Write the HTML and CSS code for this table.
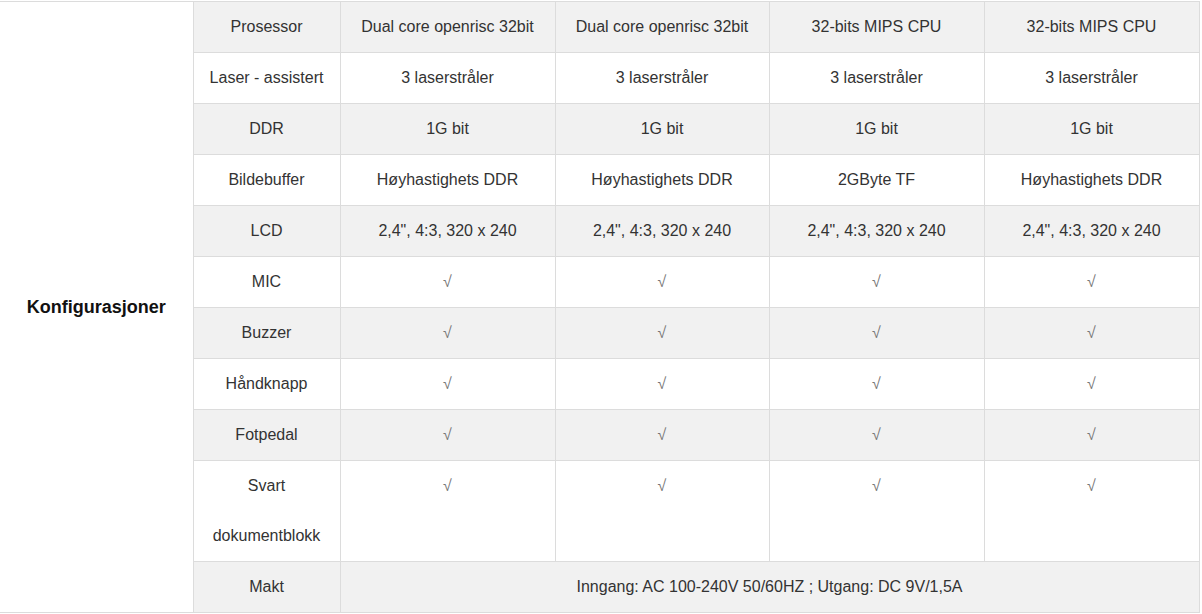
FILE: index.html
```html
<!DOCTYPE html>
<html lang="no">
<head>
<meta charset="utf-8">
<link rel="stylesheet" href="styles.css">
</head>
<body>
<table class="spec">
  <colgroup>
    <col class="c-group"><col class="c-label"><col class="c-val"><col class="c-val-narrow"><col class="c-val"><col class="c-val">
  </colgroup>
  <tbody>
    <tr class="shade">
      <td class="group" rowspan="11">Konfigurasjoner</td>
      <td>Prosessor</td><td>Dual core openrisc 32bit</td><td>Dual core openrisc 32bit</td><td>32-bits MIPS CPU</td><td>32-bits MIPS CPU</td>
    </tr>
    <tr>
      <td>Laser - assistert</td><td>3 laserstråler</td><td>3 laserstråler</td><td>3 laserstråler</td><td>3 laserstråler</td>
    </tr>
    <tr class="shade">
      <td>DDR</td><td>1G bit</td><td>1G bit</td><td>1G bit</td><td>1G bit</td>
    </tr>
    <tr>
      <td>Bildebuffer</td><td>Høyhastighets DDR</td><td>Høyhastighets DDR</td><td>2GByte TF</td><td>Høyhastighets DDR</td>
    </tr>
    <tr class="shade">
      <td>LCD</td><td>2,4", 4:3, 320 x 240</td><td>2,4", 4:3, 320 x 240</td><td>2,4", 4:3, 320 x 240</td><td>2,4", 4:3, 320 x 240</td>
    </tr>
    <tr>
      <td>MIC</td><td class="chk">√</td><td class="chk">√</td><td class="chk">√</td><td class="chk">√</td>
    </tr>
    <tr class="shade">
      <td>Buzzer</td><td class="chk">√</td><td class="chk">√</td><td class="chk">√</td><td class="chk">√</td>
    </tr>
    <tr>
      <td>Håndknapp</td><td class="chk">√</td><td class="chk">√</td><td class="chk">√</td><td class="chk">√</td>
    </tr>
    <tr class="shade">
      <td>Fotpedal</td><td class="chk">√</td><td class="chk">√</td><td class="chk">√</td><td class="chk">√</td>
    </tr>
    <tr>
      <td>Svart<br>dokumentblokk</td><td class="chk">√</td><td class="chk">√</td><td class="chk">√</td><td class="chk">√</td>
    </tr>
    <tr class="shade">
      <td>Makt</td><td colspan="4">Inngang: AC 100-240V 50/60HZ ; Utgang: DC 9V/1,5A</td>
    </tr>
  </tbody>
</table>
</body>
</html>
```
FILE: styles.css
```css
html, body {
  margin: 0;
  padding: 0;
  background: #fff;
}
body {
  padding-top: 1px;
  font-family: "Liberation Sans", Arial, sans-serif;
  font-size: 16px;
  color: #333;
}
.spec {
  border-collapse: collapse;
  table-layout: fixed;
  width: 1199px;
}
.c-group { width: 193px; }
.c-label { width: 147px; }
.c-val { width: 215px; }
.c-val-narrow { width: 214px; }
.spec td {
  border: 1px solid #dcdcdc;
  padding: 0;
  height: 50px;
  line-height: 50px;
  text-align: center;
  vertical-align: top;
  white-space: nowrap;
}
.spec tr.shade td {
  background: #f1f1f1;
}
.spec tr.shade td.group {
  background: #fff;
}
.spec td.group {
  border-left: none;
  vertical-align: middle;
  font-weight: bold;
  font-size: 18px;
  color: #111;
  line-height: 22px;
}
.spec td.chk {
  color: #777;
}
```
